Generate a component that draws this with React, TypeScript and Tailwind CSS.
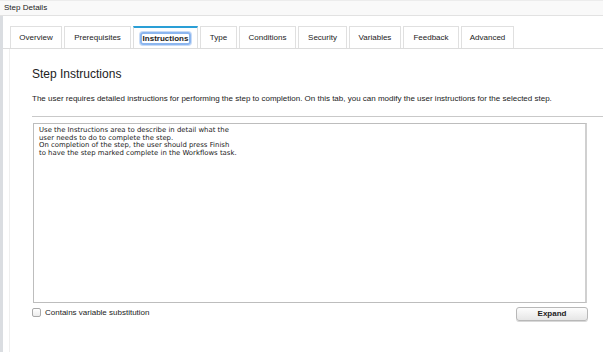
import React from "react";

const tabs = [
  { label: "Overview", w: "w-[52px]" },
  { label: "Prerequisites", w: "w-[67px]" },
  { label: "Instructions", w: "w-[65px]", active: true },
  { label: "Type", w: "w-[37px]" },
  { label: "Conditions", w: "w-[57px]" },
  { label: "Security", w: "w-[49px]" },
  { label: "Variables", w: "w-[52px]" },
  { label: "Feedback", w: "w-[56px]" },
  { label: "Advanced", w: "w-[53px]" },
];

const instructions = `Use the Instructions area to describe in detail what the
user needs to do to complete the step.
On completion of the step, the user should press Finish
to have the step marked complete in the Workflows task.`;

function Tab({ label, w, active }: { label: string; w: string; active?: boolean }) {
  if (active) {
    return (
      <div
        className={`${w} h-[22px] bg-white border-x border-[#dedede] border-t-2 border-t-[#2a9fd6] flex items-center justify-center`}
      >
        <span className="px-[1px] leading-[9px] font-bold rounded-[3px] border-2 border-[#8cb6ef] shadow-[0_0_0_1px_#c9dcf7]">
          {label}
        </span>
      </div>
    );
  }
  return (
    <div
      className={`${w} h-[22px] bg-white border-x border-t border-[#e0e0e0] flex items-center justify-center`}
    >
      {label}
    </div>
  );
}

export default function App() {
  return (
    <div className="w-[603px] h-[352px] bg-white overflow-hidden text-[#222] font-['Liberation_Sans',Arial,sans-serif]">
      <div className="h-[16px] bg-[#f9f9f9] border-t border-t-[#ececec] border-b border-[#e2e2e2] pl-[4px] flex items-center text-[8px]">
        Step Details
      </div>

      <div className="h-[336px] border-l-[3px] border-[#dadde1] flex flex-col">
        <div className="pt-[10px] pl-[7px] flex gap-[2px] border-b border-[#dcdcdc] text-[8px]">
          {tabs.map((t) => (
            <Tab key={t.label} {...t} />
          ))}
        </div>

        <div className="flex-1 ml-[6px] border-l border-[#efefef] pl-[22px] flex flex-col">
          <h1 className="mt-[18px] text-[12px] leading-[14px]">Step Instructions</h1>
          <p className="mt-[13px] text-[8px] leading-[10px]">
            The user requires detailed instructions for performing the step to completion. On this
            tab, you can modify the user instructions for the selected step.
          </p>
          <div className="mt-[12px] border-t border-[#c9c9c9]" />

          <div className="mt-[6px] ml-[1px] w-[554px] h-[180px] border border-[#bdbdbd] border-r-2 border-r-[#d0d0d0] pl-[5px] pt-[3px] whitespace-pre-line font-['DejaVu_Sans',sans-serif] text-[6.9px] leading-[7.6px] text-[#222]">
            {instructions}
          </div>

          <div className="mt-[4px] mr-[15px] flex items-start justify-between">
            <label className="mt-[1px] flex items-center gap-[4px] text-[8px] leading-[9px]">
              <span className="w-[9px] h-[9px] rounded-[2px] border border-[#a9a9a9] bg-gradient-to-b from-white to-[#ececec]" />
              Contains variable substitution
            </label>
            <button className="w-[72px] h-[14px] rounded-[3px] border border-[#b8b8b8] bg-gradient-to-b from-[#fdfdfd] to-[#e6e6e6] text-[8px] font-bold leading-none shadow-[0_1px_0_#d8d8d8]">
              Expand
            </button>
          </div>
        </div>
      </div>
    </div>
  );
}
